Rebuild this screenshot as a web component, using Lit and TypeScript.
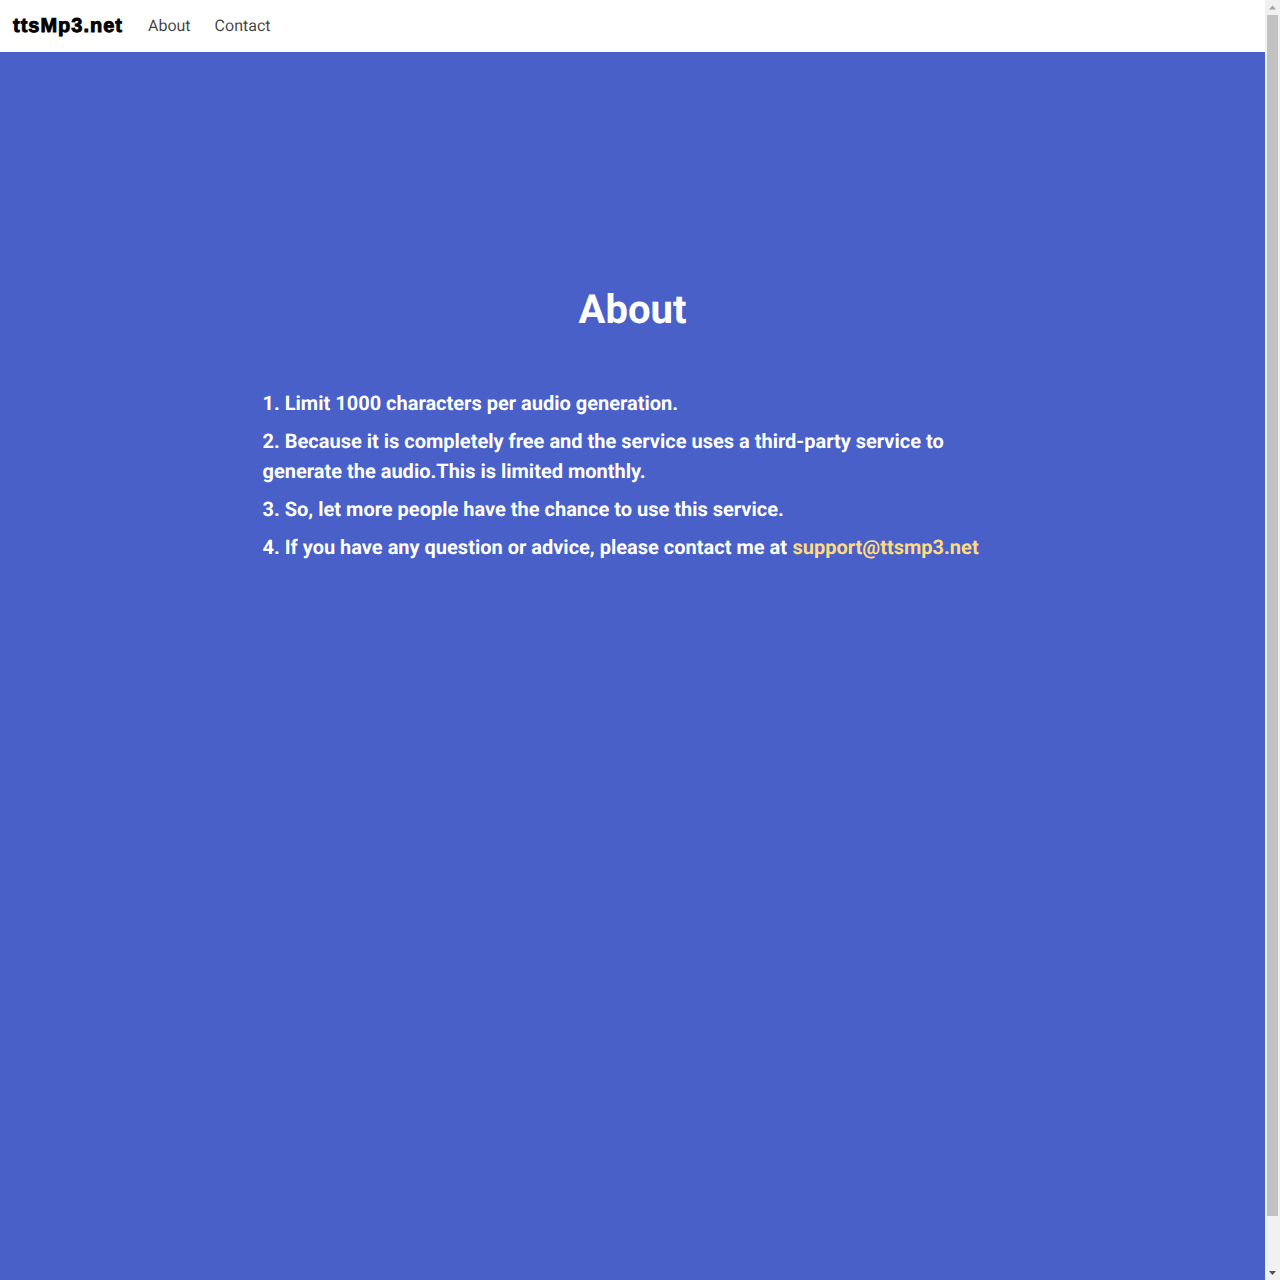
import { LitElement, html, css } from "lit";
import { customElement } from "lit/decorators.js";

@customElement("app-root")
export class AppRoot extends LitElement {
  static styles = css`
    :host { display: flex; width: 1280px; height: 1280px; overflow: hidden; font-family: Roboto, sans-serif; text-rendering: geometricPrecision; }
    .page { width: 1265px; display: flex; flex-direction: column; }
    .nav { height: 52px; background: #fff; display: flex; align-items: center; padding: 0 0 2px 13px; box-sizing: border-box; flex: none; }
    .brand { font-family: "Liberation Sans", Arial, sans-serif; font-weight: 700; font-size: 20px; letter-spacing: 1px; color: #000; margin: 2px 13px 0 0; -webkit-text-stroke: 0.9px #000; }
    .nav a { font-size: 16px; color: rgba(0,0,0,.75); padding: 0 12px; text-decoration: none; }
    .main { flex: 1; background: #4860c8; color: #fff; display: flex; flex-direction: column; align-items: center; padding-top: 233px; }
    h1 { margin: 0 0 53px; font-size: 40px; font-weight: 700; line-height: 50px; }
    .list { width: 740px; font-size: 20px; font-weight: 700; line-height: 30px; }
    p { margin: 0 0 8px; }
    .mail { color: #ffda7e; text-decoration: none; padding-left: 0.5px; }
    .bar { width: 15px; background: #f1f1f1; display: flex; flex-direction: column; align-items: center; flex: none; }
    .arrow { height: 15px; width: 15px; display: flex; align-items: center; justify-content: center; flex: none; }
    .thumb { height: 1201px; width: 11px; background: #c1c1c1; flex: none; }
    .track { flex: 1; }
  `;
  render() {
    return html`
      <div class="page">
        <div class="nav">
          <span class="brand">ttsMp3.net</span>
          <a>About</a><a>Contact</a>
        </div>
        <div class="main">
          <h1>About</h1>
          <div class="list">
            <p>1. Limit 1000 characters per audio generation.</p>
            <p>2. Because it is completely free and the service uses a third-party service to generate the audio.This is limited monthly.</p>
            <p>3. So, let more people have the chance to use this service.</p>
            <p>4. If you have any question or advice, please contact me at <a class="mail">support@ttsmp3.net</a></p>
          </div>
        </div>
      </div>
      <div class="bar">
        <div class="arrow"><svg width="9" height="6" viewBox="0 0 9 6"><path d="M4.5 0.5 L8 4.5 H1 Z" fill="#a3a3a3"/></svg></div>
        <div class="thumb"></div>
        <div class="track"></div>
        <div class="arrow"><svg width="9" height="6" viewBox="0 0 9 6"><path d="M4.5 5 L8 1 H1 Z" fill="#505050"/></svg></div>
      </div>
    `;
  }
}
